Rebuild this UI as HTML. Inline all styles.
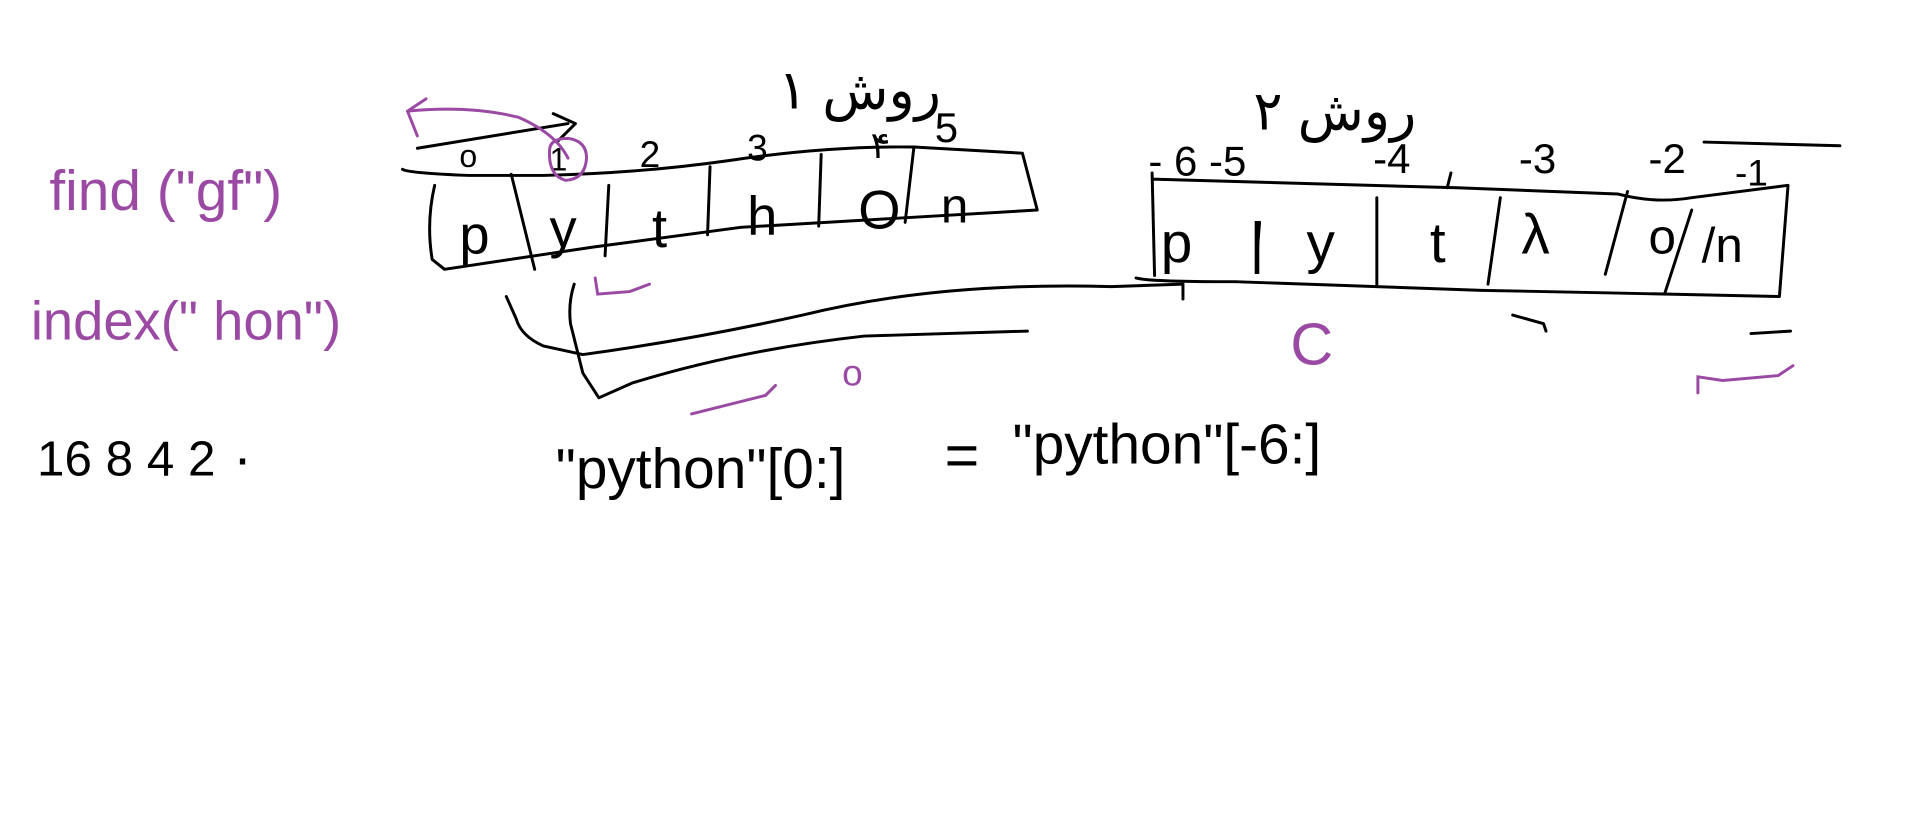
<!DOCTYPE html>
<html><head><meta charset="utf-8"><style>
html,body{margin:0;padding:0;background:#fff;width:1914px;height:829px;overflow:hidden}
svg{display:block}
text{font-family:"Liberation Sans","DejaVu Sans",sans-serif}
</style></head><body>
<svg width="1914" height="829" viewBox="0 0 1550 671" preserveAspectRatio="none" xmlns="http://www.w3.org/2000/svg">
<g fill="none" stroke="#000" stroke-width="2.4" stroke-linecap="round" stroke-linejoin="round">
<path d="M326 137 Q330 140 380 142 L440 142 Q520 140 590 130 Q670 118 740 119 L828 124 L840 170 L600 184 L480 200 L360 218 L350 210 Q345 180 352 150"/>
<path d="M414 141 L433 218 M493 150 L490 207 M575 135 L573 190 M665 125 L663 183 M740 120 L733 180"/>
<path d="M338 120 L460 100 M448 92 L466 100 L452 114"/>
<path d="M933 140 L935 223 M920 225 Q930 228 1000 228 L1200 235 L1300 237 L1440 240 M933 145 L1180 152 L1310 157 Q1340 165 1370 160 L1448 150 L1441 240"/>
<path d="M1020 180 L1018 205 M1115 160 L1115 232 M1215 160 L1205 230 M1318 155 L1300 222 M1370 170 L1348 238 M1175 140 L1172 152"/>
<path d="M1380 115 L1490 118"/>
<path d="M410 240 L418 258 Q422 272 440 280 L472 287 Q560 275 650 255 Q760 228 900 232 L958 230 L958 242"/>
<path d="M465 230 Q460 245 462 262 L472 302 L485 322 L512 310 Q600 283 700 272 L832 268"/>
<path d="M1225 255 L1250 262 L1252 268 M1418 270 L1450 268"/>
</g>
<g fill="#000" font-size="40">
<text x="372" y="205" font-size="44">p</text>
<text x="445" y="200" font-size="44">y</text>
<text x="528" y="200" font-size="44">t</text>
<text x="605" y="190" font-size="44">h</text>
<text x="695" y="185" font-size="44">O</text>
<text x="762" y="180" font-size="40">n</text>
<text x="372" y="135" font-size="26">o</text>
<text x="445" y="138" font-size="26">1</text>
<text x="518" y="135" font-size="30">2</text>
<text x="605" y="130" font-size="30">3</text>
<text x="705" y="128" font-size="30">۴</text>
<text x="757" y="115" font-size="34">5</text>
<text x="940" y="212" font-size="46">p</text>
<text x="1012" y="212" font-size="46">|</text>
<text x="1058" y="212" font-size="46">y</text>
<text x="1158" y="212" font-size="46">t</text>
<text x="1232" y="205" font-size="46">λ</text>
<text x="1335" y="205" font-size="40">o</text>
<text x="1378" y="212" font-size="40">/n</text>
<text x="930" y="142" font-size="34">- 6 -5</text>
<text x="1112" y="140" font-size="34">-4</text>
<text x="1230" y="140" font-size="34">-3</text>
<text x="1335" y="140" font-size="34">-2</text>
<text x="1405" y="150" font-size="30">-1</text>
<text x="30" y="385" font-size="40">16 8 4 2 ۰</text>
<text x="450" y="395" font-size="46">"python"[0:]</text>
<text x="765" y="385" font-size="48">=</text>
<text x="820" y="375" font-size="46">"python"[-6:]</text>
<text x="630" y="88" font-size="44" font-family="DejaVu Sans">۱ روش</text>
<text x="1015" y="105" font-size="44" font-family="DejaVu Sans">۲ روش</text>
</g>
<g fill="#9b4aa3" font-size="46">
<text x="40" y="170">find ("gf")</text>
<text x="25" y="275" font-size="44">index(" hon")</text>
<text x="1045" y="295" font-size="48">C</text>
<text x="682" y="312" font-size="30">o</text>
</g>
<g fill="none" stroke="#9b4aa3" stroke-width="2.4" stroke-linecap="round">
<path d="M338 110 L330 90 L345 80 M330 90 Q380 85 420 95 Q450 108 460 128"/>
<path d="M445 122 Q445 112 460 112 Q475 114 475 128 Q474 145 458 146 Q444 142 445 122"/>
<path d="M482 225 L484 238 L510 236 L526 230"/>
<path d="M560 335 L620 320 L628 312"/>
<path d="M1375 318 L1375 305 L1395 308 L1440 304 L1452 296"/>
</g>
</svg>
</body></html>
